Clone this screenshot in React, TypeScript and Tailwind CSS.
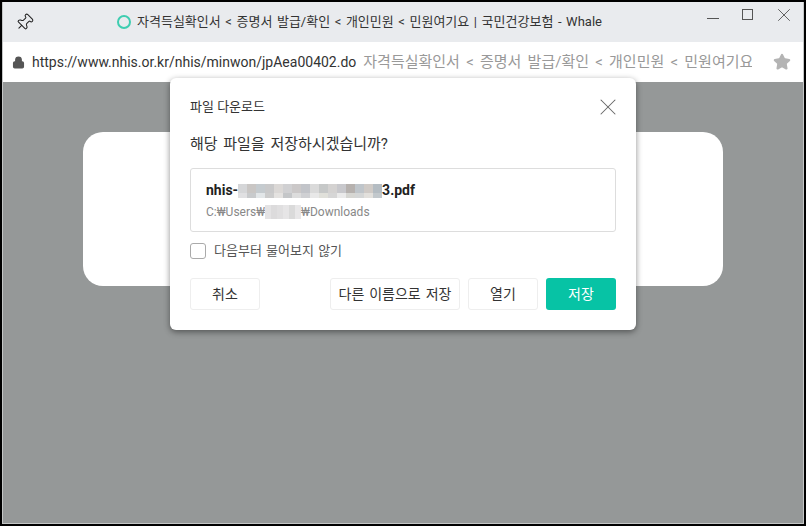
import { Lock, Pin, Star, X } from "lucide-react";

const blurTop = ["#d5d6d8", "#c9c6c4", "#c5cbcf", "#c9c9ca", "#dbd8d6", "#d0d0d2", "#cbc8c8", "#c2c4c9", "#dadada", "#c6c8c8", "#d4d2d1", "#c8c8cc", "#b6b1ae", "#bfc5ca", "#cfcac6", "#b4bcc2"];
const blurBottom = ["#e0e0e2", "#c8cacc", "#e2e6e8", "#cccccc", "#e4e2e0", "#c4c6c8", "#dcdcdc", "#cfd0d3", "#e8e8e8", "#e0e0da", "#d6d6d6", "#eaeaea", "#d6d6d2", "#d4d6d6", "#e2e0dc", "#c2c8cc"];
const pathBlur = ["#e4e3e4", "#dcdbdc", "#e0dfe0", "#e6e5e6", "#dadada", "#e8e7e8"];

function Mosaic() {
  return (
    <span className="inline-flex w-[144px] flex-col">
      <span className="flex h-[9px]">
        {blurTop.map((color, index) => (
          <span key={index} className="h-full w-[9px]" style={{ backgroundColor: color }} />
        ))}
      </span>
      <span className="flex h-[5px]">
        {blurBottom.map((color, index) => (
          <span key={index} className="h-full w-[9px]" style={{ backgroundColor: color }} />
        ))}
      </span>
    </span>
  );
}

function Button({ label, className }: { label: string; className: string }) {
  return (
    <button className={`flex h-8 items-center justify-center rounded-[3px] border border-[#eeeeee] bg-white text-[14px] text-[#333333] [word-spacing:1.5px] ${className}`}>
      {label}
    </button>
  );
}

export default function App() {
  return (
    <div className="h-[526px] w-[806px] border-2 border-black font-['Roboto','Noto_Sans_CJK_KR',sans-serif]">
      <div className="flex h-full flex-col overflow-hidden border-r border-b border-l border-[#c4c6c6] bg-white">
        <header className="flex h-10 shrink-0 items-center bg-[#e9ebee]">
          <Pin className="ml-[12px] h-[19px] w-[19px] rotate-45 text-[#222222]" strokeWidth={1.3} />
          <div className="ml-[83px] flex items-center gap-[6px]">
            <span className="h-[14px] w-[14px] rounded-full border-2 border-[#3ecdb0]" />
            <span className="text-[13px] whitespace-nowrap text-[#333333] [word-spacing:1.35px]">
              자격득실확인서 &lt; 증명서 발급/확인 &lt; 개인민원 &lt; 민원여기요 | 국민건강보험 - Whale
            </span>
          </div>
          <div className="ml-auto flex items-start pr-[8px] pb-[14px] text-[#555555]">
            <span className="mt-[9px] h-px w-[12px] bg-[#555555]" />
            <span className="ml-[23px] h-[11px] w-[11px] border border-[#555555]" />
            <X className="my-[-5px] ml-[20px] h-[22px] w-[22px]" strokeWidth={1} />
          </div>
        </header>

        <div className="flex h-10 shrink-0 items-center bg-white">
          <Lock className="ml-[9px] h-[13px] w-[13px] shrink-0 fill-[#555555] text-[#555555]" strokeWidth={2.5} />
          <span className="ml-[7px] shrink-0 text-[14px] whitespace-nowrap text-[#333333]">https://www.nhis.or.kr/nhis/minwon/jpAea00402.do</span>
          <span className="ml-[7px] w-[389px] shrink-0 overflow-hidden text-[15px] whitespace-nowrap text-[#999999] [word-spacing:2.5px]">
            자격득실확인서 &lt; 증명서 발급/확인 &lt; 개인민원 &lt; 민원여기요
          </span>
          <Star className="ml-[21px] h-[18px] w-[18px] shrink-0 fill-[#b4b4b4] text-[#b4b4b4]" />
        </div>

        <main className="relative flex-1 bg-[#959898] px-[80px] pt-[50px]">
          <div className="h-[154px] rounded-[20px] bg-white" />

          <section className="absolute top-[-4px] left-[167px] flex h-[252px] w-[466px] flex-col rounded-[6px] bg-white px-5 shadow-[0_2px_6px_rgba(0,0,0,0.45)]">
            <div className="flex h-[56px] items-center justify-between pt-[1px]">
              <span className="text-[13px] text-[#333333]">파일 다운로드</span>
              <X className="my-[-6px] mr-[-6px] h-[28px] w-[28px] text-[#666666]" strokeWidth={0.9} />
            </div>
            <p className="text-[15px] leading-[20px] text-[#333333] [word-spacing:2px]">해당 파일을 저장하시겠습니까?</p>
            <div className="mt-[14px] flex h-16 flex-col justify-center rounded-[3px] border border-[#dddddd] px-[15px]">
              <div className="flex h-[20px] items-center text-[14px] font-bold text-[#222222]">
                <span>nhis-</span>
                <Mosaic />
                <span>3.pdf</span>
              </div>
              <div className="mt-[3px] flex h-[16px] items-center text-[12px] text-[#888888]">
                <span>C:₩Users₩</span>
                <span className="flex h-[14px]">
                  {pathBlur.map((color, index) => (
                    <span key={index} className="h-full w-[6px]" style={{ backgroundColor: color }} />
                  ))}
                </span>
                <span>₩Downloads</span>
              </div>
            </div>
            <label className="mt-[11px] flex h-[16px] items-center gap-2">
              <span className="h-[16px] w-[16px] rounded-[3px] border border-[#aaaaaa]" />
              <span className="text-[13px] text-[#555555] [word-spacing:1px]">다음부터 물어보지 않기</span>
            </label>
            <div className="mt-[19px] flex gap-2">
              <Button label="취소" className="mr-auto w-[70px]" />
              <Button label="다른 이름으로 저장" className="w-[130px]" />
              <Button label="열기" className="w-[70px]" />
              <button className="flex h-8 w-[70px] items-center justify-center rounded-[3px] bg-[#07c3a5] text-[14px] text-white">저장</button>
            </div>
          </section>
        </main>
      </div>
    </div>
  );
}
